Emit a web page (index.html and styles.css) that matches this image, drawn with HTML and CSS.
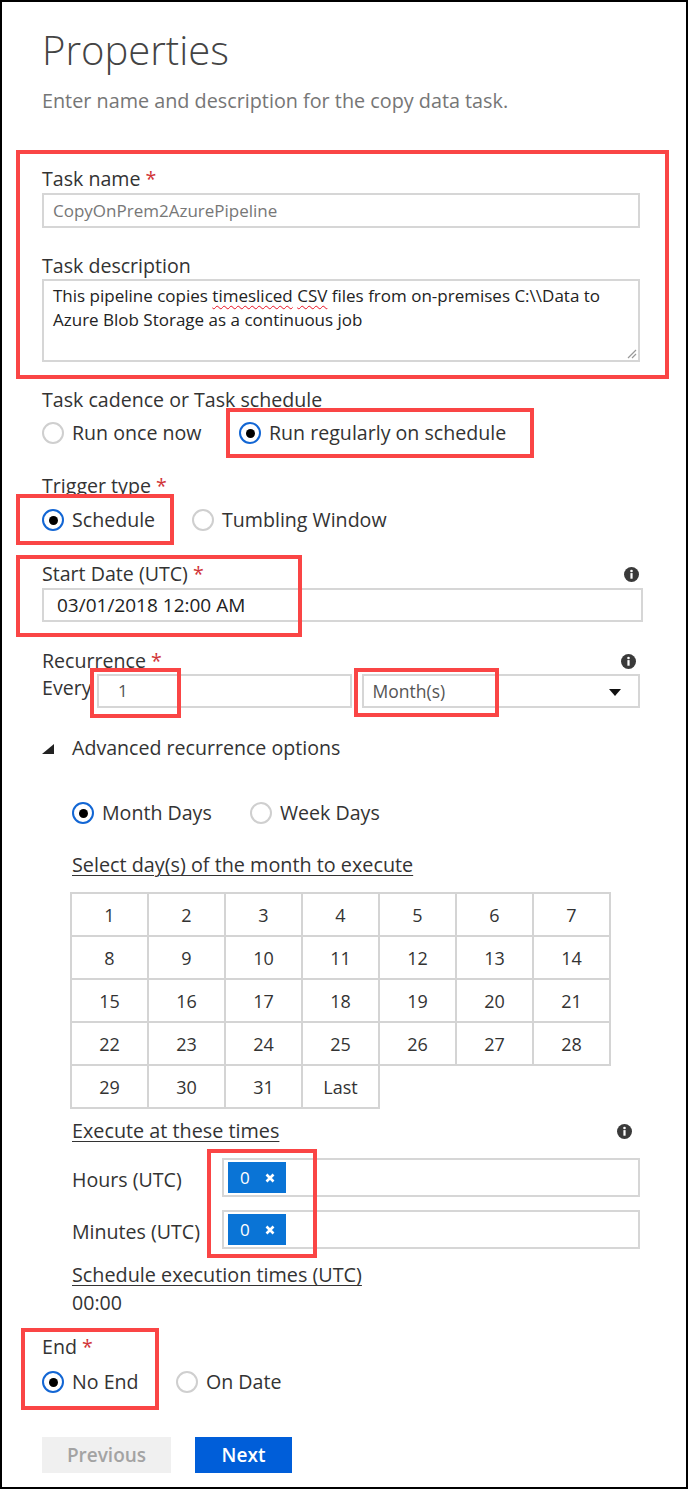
FILE: index.html
```html
<!DOCTYPE html>
<html>
<head>
<meta charset="utf-8">
<link rel="stylesheet" href="styles.css">
</head>
<body>
<div class="page">
  <h1 class="title">Properties</h1>
  <p class="subtitle">Enter name and description for the copy data task.</p>

  <div class="lbl lbl-taskname">Task name <span class="req">*</span></div>
  <div class="input input-name">CopyOnPrem2AzurePipeline</div>

  <div class="lbl lbl-desc">Task description</div>
  <div class="textarea">
    <p class="ta-text">This pipeline copies <span class="spell">timesliced</span> <span class="spell">CSV</span> files from on-premises C:\\Data to<br>Azure Blob Storage as a continuous job</p>
    <svg class="grip" width="12" height="12" viewBox="0 0 12 12"><path d="M11 3 L3 11 M11 7 L7 11" stroke="#999" stroke-width="1.2" fill="none"/></svg>
  </div>

  <div class="lbl lbl-cadence">Task cadence or Task schedule</div>
  <div class="radios radios-cadence">
    <div class="opt opt-once"><span class="radio"></span><span>Run once now</span></div>
    <div class="opt"><span class="radio on"></span><span>Run regularly on schedule</span></div>
  </div>

  <div class="lbl lbl-trigger">Trigger type <span class="req">*</span></div>
  <div class="radios radios-trigger">
    <div class="opt opt-sched"><span class="radio on"></span><span>Schedule</span></div>
    <div class="opt"><span class="radio"></span><span>Tumbling Window</span></div>
  </div>

  <div class="lbl-row lbl-start">
    <div class="lbl">Start Date (UTC) <span class="req">*</span></div>
    <svg class="info" width="15" height="15" viewBox="0 0 15 15"><circle cx="7.5" cy="7.5" r="7.5" fill="#3a3a3a"/><circle cx="7.5" cy="4" r="1.3" fill="#fff"/><rect x="6.4" y="6.1" width="2.2" height="5.6" fill="#fff"/></svg>
  </div>
  <div class="input input-start">03/01/2018 12:00 AM</div>

  <div class="lbl-row lbl-recur">
    <div class="lbl">Recurrence <span class="req">*</span></div>
    <svg class="info" width="15" height="15" viewBox="0 0 15 15"><circle cx="7.5" cy="7.5" r="7.5" fill="#3a3a3a"/><circle cx="7.5" cy="4" r="1.3" fill="#fff"/><rect x="6.4" y="6.1" width="2.2" height="5.6" fill="#fff"/></svg>
  </div>
  <div class="recur-row">
    <div class="every">Every</div>
    <div class="input input-num">1</div>
    <div class="input select">
      <span>Month(s)</span>
      <svg width="12" height="7" viewBox="0 0 12 7"><polygon points="0,0 12,0 6,7" fill="#111"/></svg>
    </div>
  </div>

  <div class="adv-head">
    <svg class="adv-tri" width="12" height="10" viewBox="0 0 12 10"><polygon points="12,0 12,10 0,10" fill="#222"/></svg>
    <span>Advanced recurrence options</span>
  </div>

  <div class="adv">
    <div class="radios radios-month">
      <div class="opt opt-month"><span class="radio on"></span><span>Month Days</span></div>
      <div class="opt"><span class="radio"></span><span>Week Days</span></div>
    </div>

    <div class="lbl ulbl lbl-days">Select day(s) of the month to execute</div>
    <div class="days">
      <div class="day">1</div><div class="day">2</div><div class="day">3</div><div class="day">4</div><div class="day">5</div><div class="day">6</div><div class="day">7</div>
      <div class="day">8</div><div class="day">9</div><div class="day">10</div><div class="day">11</div><div class="day">12</div><div class="day">13</div><div class="day">14</div>
      <div class="day">15</div><div class="day">16</div><div class="day">17</div><div class="day">18</div><div class="day">19</div><div class="day">20</div><div class="day">21</div>
      <div class="day">22</div><div class="day">23</div><div class="day">24</div><div class="day">25</div><div class="day">26</div><div class="day">27</div><div class="day">28</div>
      <div class="day">29</div><div class="day">30</div><div class="day">31</div><div class="day">Last</div>
    </div>

    <div class="lbl-row lbl-exec">
      <div class="lbl ulbl">Execute at these times</div>
      <svg class="info" width="15" height="15" viewBox="0 0 15 15"><circle cx="7.5" cy="7.5" r="7.5" fill="#3a3a3a"/><circle cx="7.5" cy="4" r="1.3" fill="#fff"/><rect x="6.4" y="6.1" width="2.2" height="5.6" fill="#fff"/></svg>
    </div>
    <div class="time-row">
      <div class="time-lbl">Hours (UTC)</div>
      <div class="input tags"><span class="tag">0<svg width="10" height="10" viewBox="0 0 10 10"><path d="M1.5 1.5 L8.5 8.5 M8.5 1.5 L1.5 8.5" stroke="#fff" stroke-width="2.6"/></svg></span></div>
    </div>
    <div class="time-row time-row2">
      <div class="time-lbl">Minutes (UTC)</div>
      <div class="input tags"><span class="tag">0<svg width="10" height="10" viewBox="0 0 10 10"><path d="M1.5 1.5 L8.5 8.5 M8.5 1.5 L1.5 8.5" stroke="#fff" stroke-width="2.6"/></svg></span></div>
    </div>

    <div class="lbl ulbl lbl-sched">Schedule execution times (UTC)</div>
    <div class="lbl lbl-time">00:00</div>
  </div>

  <div class="lbl lbl-end">End <span class="req">*</span></div>
  <div class="radios radios-end">
    <div class="opt opt-noend"><span class="radio on"></span><span>No End</span></div>
    <div class="opt"><span class="radio"></span><span>On Date</span></div>
  </div>

  <div class="buttons">
    <div class="btn btn-prev">Previous</div>
    <div class="btn btn-next">Next</div>
  </div>

  <div class="annot a1"></div>
  <div class="annot a2"></div>
  <div class="annot a3"></div>
  <div class="annot a4"></div>
  <div class="annot a5"></div>
  <div class="annot a6"></div>
  <div class="annot a7"></div>
  <div class="annot a8"></div>
</div>
</body>
</html>
```

FILE: styles.css
```css
html, body {
  margin: 0;
  padding: 0;
  background: #fff;
}

.page {
  position: relative;
  box-sizing: border-box;
  width: 688px;
  height: 1489px;
  border: 2px solid #000;
  padding: 24px 46px 0 40px;
  font-family: "Open Sans", "Noto Sans", sans-serif;
  color: #333;
  overflow: hidden;
}

.title {
  margin: 0;
  font-size: 40px;
  line-height: 48px;
  font-weight: 300;
  color: #444;
}

.subtitle {
  margin: 15px 0 0;
  font-size: 19.8px;
  line-height: 24px;
  color: #767676;
}

.lbl {
  font-size: 19.6px;
  line-height: 24px;
  color: #333;
}

.req {
  color: #d13438;
}

.lbl-row {
  display: flex;
  justify-content: space-between;
  align-items: center;
}

.info {
  display: block;
  margin-right: 4px;
}

.lbl-taskname { margin-top: 54px; margin-bottom: 2px; }
.lbl-desc { margin-top: 26px; margin-bottom: 1px; }
.lbl-cadence { margin-top: 26px; margin-bottom: 9px; }
.lbl-trigger { margin-top: 29px; margin-bottom: 10px; }
.lbl-start { margin-top: 30px; margin-bottom: 2px; margin-right: -3px; }
.lbl-recur { margin-top: 27px; margin-bottom: 1px; }

.input {
  box-sizing: border-box;
  border: 2px solid #d6d6d6;
  background: #fff;
}

.input-name {
  height: 35px;
  padding: 0 9px;
  font-size: 17px;
  line-height: 31px;
  color: #777;
}

.textarea {
  position: relative;
  box-sizing: border-box;
  height: 83px;
  border: 2px solid #d6d6d6;
  padding: 3px 9px;
}

.ta-text {
  margin: 0;
  font-size: 17px;
  line-height: 24px;
  color: #222;
}

.spell {
  text-decoration: underline wavy #e81123;
  text-decoration-thickness: 1px;
  text-underline-offset: 3px;
}

.grip {
  position: absolute;
  right: 1px;
  bottom: 1px;
}

.radios {
  display: flex;
  align-items: center;
  height: 24px;
}

.opt {
  display: flex;
  align-items: center;
  gap: 8px;
  font-size: 19.6px;
  line-height: 24px;
  color: #333;
}

.opt-once { width: 197px; }
.opt-sched { width: 150px; }
.opt-month { width: 178px; }
.opt-noend { width: 134px; }

.radio {
  box-sizing: border-box;
  width: 22px;
  height: 22px;
  border: 2px solid #cfcfcf;
  border-radius: 50%;
  display: flex;
  align-items: center;
  justify-content: center;
  flex: none;
}

.radio.on {
  border-color: #1266d4;
}

.radio.on::after {
  content: "";
  width: 9px;
  height: 9px;
  border-radius: 50%;
  background: #000;
}

.input-start {
  height: 34px;
  margin-right: -3px;
  padding: 0 13px;
  font-size: 19px;
  line-height: 30px;
  color: #222;
}

.recur-row {
  display: flex;
  align-items: flex-start;
}

.every {
  width: 55px;
  flex: none;
  margin-top: 2px;
  font-size: 19.6px;
  line-height: 24px;
  color: #333;
}

.input-num {
  width: 255px;
  height: 34px;
  padding: 0 19px;
  font-size: 17px;
  line-height: 30px;
  color: #555;
}

.select {
  width: 279px;
  height: 34px;
  margin-left: 10px;
  padding: 0 17px 0 9px;
  display: flex;
  align-items: center;
  justify-content: space-between;
  font-size: 17.5px;
  color: #555;
}

.select svg {
  margin-top: 3px;
}

.adv-head {
  margin-top: 28px;
  display: flex;
  align-items: center;
  font-size: 19.6px;
  line-height: 24px;
  color: #333;
}

.adv-tri {
  margin-right: 18px;
  margin-top: 1px;
}

.adv {
  padding-left: 30px;
}

.radios-month {
  margin-top: 41px;
}

.ulbl {
  font-size: 19.8px;
  text-decoration: underline;
  text-underline-offset: 3px;
  text-decoration-thickness: 1px;
}

.lbl-days {
  margin-top: 28px;
  margin-bottom: 15px;
}

.days {
  display: grid;
  grid-template-columns: repeat(7, 77px);
  grid-auto-rows: 43px;
  width: max-content;
  border-top: 2px solid #d4d4d4;
  border-left: 2px solid #d4d4d4;
  margin-left: -2px;
}

.day {
  box-sizing: border-box;
  border-right: 2px solid #d4d4d4;
  border-bottom: 2px solid #d4d4d4;
  display: flex;
  align-items: center;
  justify-content: center;
  font-size: 18px;
  color: #333;
}

.lbl-exec {
  margin-top: 10px;
  margin-bottom: 15px;
}

.lbl-exec .info {
  margin-right: 8px;
}

.time-row {
  display: flex;
  align-items: center;
}

.time-row2 {
  margin-top: 13px;
}

.time-lbl {
  width: 150px;
  flex: none;
  font-size: 19.6px;
  line-height: 24px;
  color: #333;
  margin-top: 4px;
}

.tags {
  width: 419px;
  height: 39px;
  padding: 2px 4px;
}

.tag {
  box-sizing: border-box;
  display: inline-flex;
  align-items: center;
  gap: 15px;
  width: 58px;
  height: 31px;
  padding-left: 12px;
  background: #0a74d6;
  color: #fff;
  font-size: 17px;
}

.lbl-sched {
  margin-top: 14px;
}

.lbl-time {
  margin-top: 4px;
}

.lbl-end {
  margin-top: 20px;
}

.radios-end {
  margin-top: 11px;
}

.buttons {
  margin-top: 43px;
  display: flex;
  gap: 24px;
}

.btn {
  box-sizing: border-box;
  height: 36px;
  display: flex;
  align-items: center;
  justify-content: center;
  font-size: 19px;
  font-weight: 600;
}

.btn-prev {
  width: 129px;
  background: #f0f0f0;
  color: #a3a3a3;
}

.btn-next {
  width: 97px;
  background: #005ed9;
  color: #fff;
}

.annot {
  position: absolute;
  box-sizing: border-box;
  border: 4px solid #fa4545;
}

.a1 { left: 14px; top: 148px; width: 653px; height: 229px; }
.a2 { left: 224px; top: 406px; width: 308px; height: 50px; }
.a3 { left: 14px; top: 492px; width: 158px; height: 51px; }
.a4 { left: 14px; top: 553px; width: 286px; height: 82px; }
.a5 { left: 88px; top: 666px; width: 91px; height: 50px; }
.a6 { left: 352px; top: 666px; width: 145px; height: 49px; }
.a7 { left: 205px; top: 1147px; width: 110px; height: 109px; }
.a8 { left: 19px; top: 1326px; width: 138px; height: 82px; }
```
